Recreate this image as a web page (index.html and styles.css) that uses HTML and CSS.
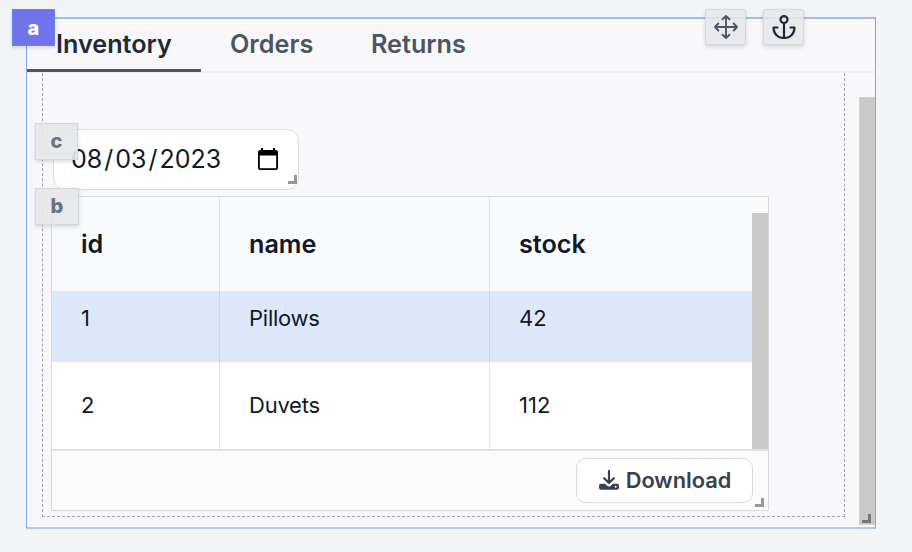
FILE: index.html
```html
<!DOCTYPE html>
<html lang="en">
<head>
<meta charset="utf-8">
<title>Inventory</title>
<link rel="stylesheet" href="styles.css">
</head>
<body>
<main class="frame">
  <nav class="tabs">
    <a class="tab active">Inventory</a>
    <a class="tab orders">Orders</a>
    <a class="tab returns">Returns</a>
  </nav>
  <div class="body">
    <div class="canvas">
      <div class="date">
        <span class="value"><span>08</span><i>/</i><span>03</span><i>/</i><span>2023</span></span>
        <svg class="calendar" viewBox="0 0 20 22"><path d="M3 0h2v2h10V0h2v2h1a2 2 0 0 1 2 2v16a2 2 0 0 1-2 2H2a2 2 0 0 1-2-2V4a2 2 0 0 1 2-2h1zM1.800 7.500V20.200h16.400V7.500z" fill-rule="evenodd"/></svg>
        <b class="grip"></b>
        <div class="badge c">c</div>
      </div>
      <section class="table">
        <div class="grid">
          <div class="rows">
            <div class="row head"><span>id</span><span>name</span><span>stock</span></div>
            <div class="row selected"><span>1</span><span class="word">Pillows</span><span>42</span></div>
            <div class="row last"><span>2</span><span class="word">Duvets</span><span>112</span></div>
          </div>
          <div class="track"><div class="thumb"></div></div>
        </div>
        <footer class="foot">
          <button class="download">
            <svg viewBox="0 0 20 20"><path d="M10 1v11M5.200 8.200L10 13l4.800-4.800" fill="none" stroke="#374151" stroke-width="2.200" stroke-linecap="round" stroke-linejoin="round"/><path d="M2 13.800h4l2.500 2.200q1.500 1 3 0l2.500-2.200h4q2 0 2 2v2q0 2-2 2H2q-2 0-2-2v-2q0-2 2-2z" fill="#374151"/><circle cx="16.700" cy="16.700" r="1" fill="#fff"/></svg>
            <span>Download</span>
          </button>
        </footer>
        <b class="grip"></b>
        <div class="badge b">b</div>
      </section>
    </div>
    <div class="scroll"></div>
  </div>
  <b class="grip"></b>
  <div class="badge a">a</div>
  <div class="tool move"><svg viewBox="0 0 24 24"><path d="M12 1v22M1 12h22M8.500 4.300L12 1l3.500 3.300M8.500 19.700L12 23l3.500-3.300M4.300 8.500L1 12l3.300 3.500M19.700 8.500L23 12l-3.300 3.500" /></svg></div>
  <div class="tool anchor"><svg viewBox="0 0 24 24"><circle cx="12" cy="4.600" r="3.500"/><path d="M12 8V23M5.500 12.500H1.500C1.500 19 6 23 12 23s10.500-4 10.500-10.500h-4"/></svg></div>
</main>
</body>
</html>
```

FILE: styles.css
```css
* { box-sizing: border-box; }
body { margin: 0; padding: 17px 0 0 26px; height: 552px; background: #f3f4f6; font-family: Inter, "Liberation Sans", sans-serif; color: #111827; overflow: hidden; }
.frame { position: relative; display: flex; flex-direction: column; width: 850px; height: 512px; background: #f8f8fb; border: 1px solid #81a7ee; border-width: 2px 1px; border-top-color: #9ebbf2; border-bottom-color: #b2c7f3; }
.tabs { display: flex; height: 54px; border-bottom: 2px solid #eeeff1; }
.tab { height: 53px; padding-top: 10px; font-size: 25.200px; line-height: 30px; font-weight: 600; color: #4b5563; white-space: nowrap; }
.active { width: 174px; padding-left: 29px; color: #1f2937; border-bottom: 3px solid #505762; }
.orders { width: 141px; padding-left: 29px; }
.returns { padding-left: 29px; }
.body { display: flex; justify-content: space-between; flex: 1; padding-left: 15px; }
.canvas { width: 803px; height: 444px; padding: 56px 0 0 8px; border: 1px dashed #9ca3af; border-top: 0; }
.scroll { width: 16px; height: 428px; margin-top: 24px; background: #c9c9c9; border: 1px solid #d2d2d2; border-right: 0; }
.date { position: relative; display: flex; align-items: center; width: 246px; height: 61px; margin-left: 2px; padding: 0 20px 2px 17px; justify-content: space-between; background: #fff; border: 1px solid #d9dbe0; border-radius: 12px; }
.value { display: flex; font-size: 25px; line-height: 30px; white-space: nowrap; }
.value i { font-style: normal; padding: 0 2px; }
.calendar { width: 20px; height: 22px; }
.table { position: relative; width: 718px; height: 315px; margin-top: 6px; background: #fbfbfb; border: 1px solid #d6d9de; }
.grid { display: flex; height: 252px; }
.rows { width: 701px; }
.row { display: grid; grid-template-columns: 168px 270px 1fr; font-size: 22px; line-height: 28px; background: #fff; }
.row span { padding-left: 29px; border-right: 1px solid #e1e3e6; }
.row span:last-child { border-right: 0; }
.row .word { letter-spacing: -.25px; }
.head { height: 94px; background: #f9fafb; font-size: 25.200px; font-weight: 600; }
.head span { padding-top: 33px; }
.selected { height: 71px; background: #dde8fa; }
.selected span { padding-top: 13px; border-color: #c3d8f8; }
.last { height: 87px; }
.last span { padding-top: 29px; }
.track { width: 16px; padding-top: 16px; background: #fafafa; }
.thumb { height: 236px; background: #c9c9c9; }
.foot { display: flex; justify-content: flex-end; height: 61px; padding: 7px 15px 0 0; border-top: 2px solid #dcdfe3; }
.download { display: flex; align-items: center; justify-content: center; gap: 7px; width: 177px; height: 45px; padding: 0 0 2px 1px; border: 1px solid #d6d9de; border-radius: 10px; background: #fff; color: #374151; font: 600 21.800px/28px Inter, "Liberation Sans", sans-serif; }
.download svg { width: 20px; height: 20px; }
.grip { position: absolute; right: 4px; bottom: 3px; width: 9px; height: 9px; border: solid #989898; border-width: 0 3px 3px 0; }
.date .grip { right: 1px; bottom: 5px; }
.frame > .grip { right: 4px; bottom: 4px; border-color: #777; }
.badge, .tool { position: absolute; display: flex; align-items: center; justify-content: center; background: rgba(229, 231, 235, .92); border: 1px solid #d5d8dd; box-shadow: 0 2px 4px rgba(0, 0, 0, .13); }
.badge { width: 43px; height: 37px; padding-bottom: 2px; font-size: 20px; line-height: 24px; font-weight: 800; color: #6b7280; }
.a { left: -15px; top: -10px; padding-bottom: 0; background: #7073e9; border-color: #6285f2; color: #fff; }
.c { left: -19px; top: -7px; }
.b { left: -17px; top: -9px; width: 44px; }
.tool { top: -10px; width: 41px; height: 36px; border-radius: 2px; background: rgba(229, 231, 235, .85); }
.tool svg { width: 24px; height: 24px; fill: none; stroke: #4b5563; stroke-width: 1.900; stroke-linecap: round; stroke-linejoin: round; }
.move { left: 678px; }
.anchor { left: 736px; }
.anchor svg { stroke: #1f2937; stroke-width: 2.200; }
```
